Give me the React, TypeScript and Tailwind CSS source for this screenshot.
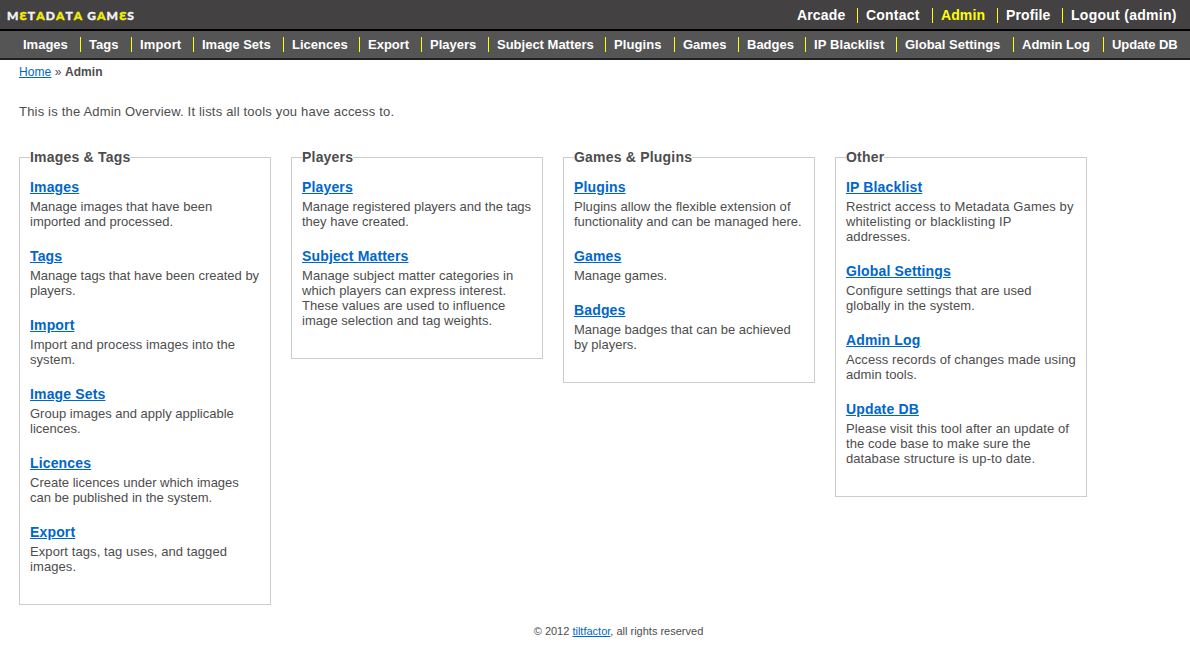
type NavItem = { label: string; cell: string; active?: boolean };

const mainNav: NavItem[] = [
  { label: 'Arcade', cell: 'w-[69px] tracking-[0.15px]' },
  { label: 'Contact', cell: 'w-[75px] tracking-[0.2px]' },
  { label: 'Admin', cell: 'w-[65px] tracking-[0.1px]', active: true },
  { label: 'Profile', cell: 'w-[65px] tracking-[0.1px]' },
  { label: 'Logout (admin)', cell: 'w-[128px] tracking-[0.27px]' },
];

const adminNav: NavItem[] = [
  { label: 'Images', cell: 'w-[66px]' },
  { label: 'Tags', cell: 'w-[51px]' },
  { label: 'Import', cell: 'w-[62px] tracking-[0.15px]' },
  { label: 'Image Sets', cell: 'w-[90px]' },
  { label: 'Licences', cell: 'w-[76px]' },
  { label: 'Export', cell: 'w-[62px]' },
  { label: 'Players', cell: 'w-[67px]' },
  { label: 'Subject Matters', cell: 'w-[117px]' },
  { label: 'Plugins', cell: 'w-[69px] tracking-[0.1px]' },
  { label: 'Games', cell: 'w-[64px]' },
  { label: 'Badges', cell: 'w-[67px]' },
  { label: 'IP Blacklist', cell: 'w-[91px] tracking-[0.1px]' },
  { label: 'Global Settings', cell: 'w-[117px]' },
  { label: 'Admin Log', cell: 'w-[90px]' },
  { label: 'Update DB', cell: 'w-[87px] -tracking-[0.1px]' },
];

type Tool = { name: string; lines: string[]; spacing?: string };
type Group = { title: string; tools: Tool[] };

const groups: Group[] = [
  {
    title: 'Images & Tags',
    tools: [
      { name: 'Images', lines: ['Manage images that have been', 'imported and processed.'] },
      { name: 'Tags', lines: ['Manage tags that have been created by', 'players.'] },
      { name: 'Import', lines: ['Import and process images into the', 'system.'], spacing: 'tracking-[0.06px]' },
      { name: 'Image Sets', lines: ['Group images and apply applicable', 'licences.'] },
      { name: 'Licences', lines: ['Create licences under which images', 'can be published in the system.'] },
      { name: 'Export', lines: ['Export tags, tag uses, and tagged', 'images.'], spacing: 'tracking-[0.08px]' },
    ],
  },
  {
    title: 'Players',
    tools: [
      { name: 'Players', lines: ['Manage registered players and the tags', 'they have created.'] },
      {
        name: 'Subject Matters',
        lines: [
          'Manage subject matter categories in',
          'which players can express interest.',
          'These values are used to influence',
          'image selection and tag weights.',
        ],
        spacing: 'tracking-[0.05px]',
      },
    ],
  },
  {
    title: 'Games & Plugins',
    tools: [
      { name: 'Plugins', lines: ['Plugins allow the flexible extension of', 'functionality and can be managed here.'], spacing: 'first-line:tracking-[0.03px]' },
      { name: 'Games', lines: ['Manage games.'] },
      { name: 'Badges', lines: ['Manage badges that can be achieved', 'by players.'] },
    ],
  },
  {
    title: 'Other',
    tools: [
      {
        name: 'IP Blacklist',
        lines: ['Restrict access to Metadata Games by', 'whitelisting or blacklisting IP', 'addresses.'],
        spacing: 'tracking-[0.12px]',
      },
      {
        name: 'Global Settings',
        lines: ['Configure settings that are used', 'globally in the system.'],
        spacing: 'tracking-[0.04px]',
      },
      {
        name: 'Admin Log',
        lines: ['Access records of changes made using', 'admin tools.'],
        spacing: 'tracking-[0.08px]',
      },
      {
        name: 'Update DB',
        lines: ['Please visit this tool after an update of', 'the code base to make sure the', 'database structure is up-to date.'],
        spacing: 'tracking-[0.08px]',
      },
    ],
  },
];

const logo: [string, boolean][] = [
  ['M', false], ['Ɛ', true], ['T', false], ['A', true], ['D', false], ['A', true], ['T', false], ['A', true],
  [' ', false], ['G', false], ['A', true], ['M', false], ['Ɛ', true], ['S', false],
];

function Nav({ items, text }: { items: NavItem[]; text: string }) {
  return (
    <ul className={`flex whitespace-nowrap font-bold leading-[15px] ${text}`}>
      {items.map((item, i) => (
        <li
          key={item.label}
          className={`h-[15px] shrink-0 ${item.cell} ${i > 0 ? 'border-l border-[#ffff00] pl-2' : 'pl-[9px]'} ${item.active ? 'text-[#ffff00]' : 'text-white'}`}
        >
          <a href="#">{item.label}</a>
        </li>
      ))}
    </ul>
  );
}

function ToolGroup({ title, tools }: Group) {
  return (
    <fieldset className="w-[252px] border border-[#cccccc] px-[10px] pb-[30px]">
      <legend className="h-[18px] text-[14px] font-bold leading-[18px] tracking-[0.2px]">{title}</legend>
      <div className="flex flex-col gap-[18px] pt-3">
        {tools.map((tool) => (
          <section key={tool.name}>
            <h2 className="h-[21px] text-[14px] font-bold leading-[18px] tracking-[0.15px]">
              <a href="#" className="text-[#0066cc] underline">{tool.name}</a>
            </h2>
            <p className={`whitespace-nowrap ${tool.spacing ?? ''}`}>
              {tool.lines.map((line) => (
                <span key={line} className="block">{line}</span>
              ))}
            </p>
          </section>
        ))}
      </div>
    </fieldset>
  );
}

export default function App() {
  return (
    <div className="h-[664px] w-[1190px] overflow-hidden bg-white font-['Liberation_Sans',Arial,sans-serif] text-[13px] leading-[15px] text-[#4d4d4d]">
      <header className="flex h-[31px] justify-between border-b-2 border-black bg-[#434142] pt-2">
        <a href="#" className="flex h-[15px] whitespace-pre pl-[7px] font-['Lato',sans-serif] text-[12px] font-black leading-[15px] tracking-[1.1px] [-webkit-text-stroke:0.4px_currentColor]">
          {logo.map(([letter, bright], i) => (
            <span key={i} className={bright ? 'text-[#f2ee00]' : 'text-[#f0f0f0]'}>{letter}</span>
          ))}
        </a>
        <Nav items={mainNav} text="text-[14px]" />
      </header>
      <nav className="h-[29px] border-b-2 border-[#222222] bg-[#555555] pl-[14px] pt-[6px]">
        <Nav items={adminNav} text="text-[13px]" />
      </nav>
      <main className="px-[19px] pt-1">
        <div className="h-[40px] text-[12px] leading-[16px] tracking-[0.08px]">
          <a href="#" className="text-[#0066cc] underline">Home</a> » <strong>Admin</strong>
        </div>
        <p className="h-[44px] tracking-[0.19px]">This is the Admin Overview. It lists all tools you have access to.</p>
        <div className="flex items-start gap-5">
          {groups.map((group) => (
            <ToolGroup key={group.title} {...group} />
          ))}
        </div>
      </main>
      <footer className="pl-[47px] pt-[19px] text-center text-[11px] leading-[15px]">
        © 2012 <a href="#" className="text-[#0066cc] underline">tiltfactor</a>, all rights reserved
      </footer>
    </div>
  );
}
